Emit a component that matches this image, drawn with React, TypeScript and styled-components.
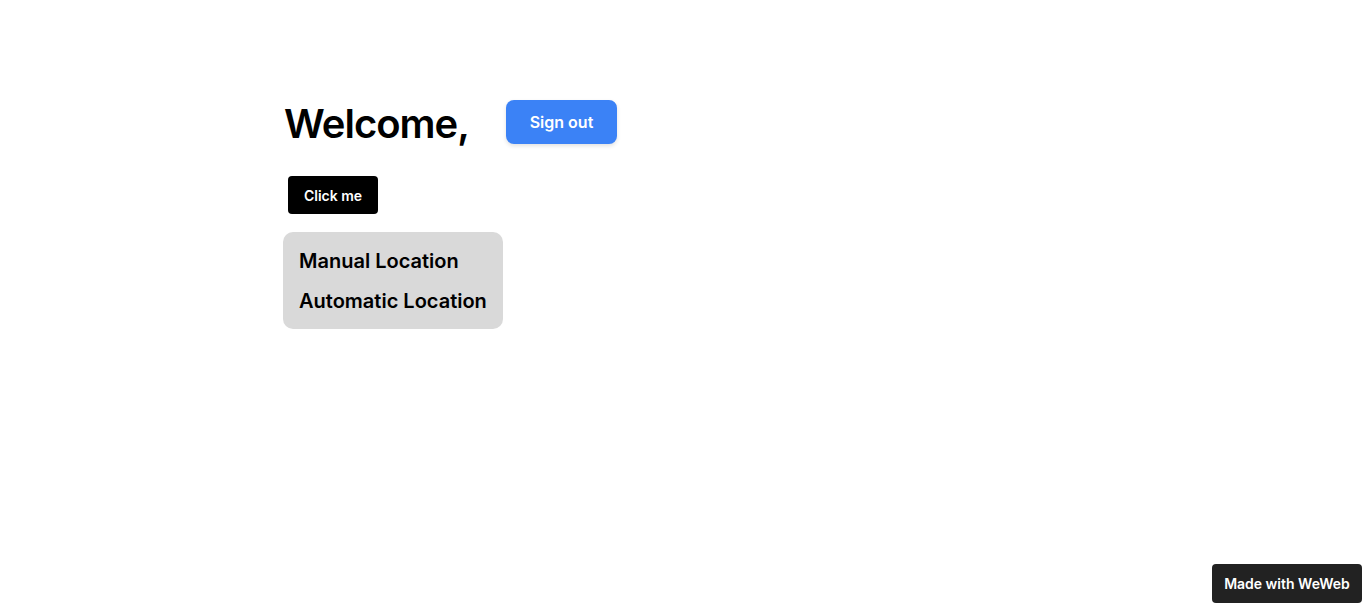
import React from "react";
import styled, { createGlobalStyle } from "styled-components";

const Global = createGlobalStyle`
  html, body { margin: 0; padding: 0; background: #fff; }
  body { font-family: Inter, "Noto Sans", sans-serif; color: #000; }
`;

const Page = styled.div`
  min-height: 607px;
  box-sizing: border-box;
  padding: 100px 0 0 284px;
  display: flex;
  flex-direction: column;
  align-items: flex-start;
`;

const HeaderRow = styled.div`
  display: flex;
  align-items: flex-start;
  gap: 41px;
`;

const Title = styled.h1`
  margin: 0;
  padding-top: 2px;
  width: 181px;
  white-space: nowrap;
  font-size: 40px;
  font-weight: 600;
  letter-spacing: -1px;
  line-height: 44px;
`;

const SignOut = styled.button`
  width: 111px;
  height: 44px;
  border: none;
  border-radius: 8px;
  background: #3b82f6;
  color: #fff;
  font-family: inherit;
  font-size: 16px;
  font-weight: 600;
  box-shadow: 0 2px 4px rgba(0, 0, 0, 0.12);
  cursor: pointer;
`;

const ClickMe = styled.button`
  margin: 30px 0 0 4px;
  width: 90px;
  height: 38px;
  border: none;
  border-radius: 4px;
  background: #000;
  color: #fff;
  font-family: inherit;
  font-size: 14px;
  font-weight: 600;
  cursor: pointer;
`;

const LocationBox = styled.div`
  margin: 18px 0 0 -1px;
  width: 220px;
  box-sizing: border-box;
  padding: 9px 15px 8px 16px;
  background: #d9d9d9;
  border-radius: 10px;
  display: flex;
  flex-direction: column;
`;

const LocationItem = styled.div`
  font-size: 20px;
  font-weight: 600;
  line-height: 40px;
`;

const Badge = styled.div`
  position: fixed;
  right: 4px;
  bottom: 4px;
  width: 150px;
  height: 39px;
  display: flex;
  align-items: center;
  justify-content: center;
  background: #222;
  color: #fff;
  border-radius: 4px;
  font-size: 14px;
  font-weight: 600;
`;

export default function App() {
  return (
    <>
      <Global />
      <Page>
        <HeaderRow>
          <Title>Welcome,</Title>
          <SignOut>Sign out</SignOut>
        </HeaderRow>
        <ClickMe>Click me</ClickMe>
        <LocationBox>
          <LocationItem>Manual Location</LocationItem>
          <LocationItem>Automatic Location</LocationItem>
        </LocationBox>
      </Page>
      <Badge>Made with WeWeb</Badge>
    </>
  );
}
